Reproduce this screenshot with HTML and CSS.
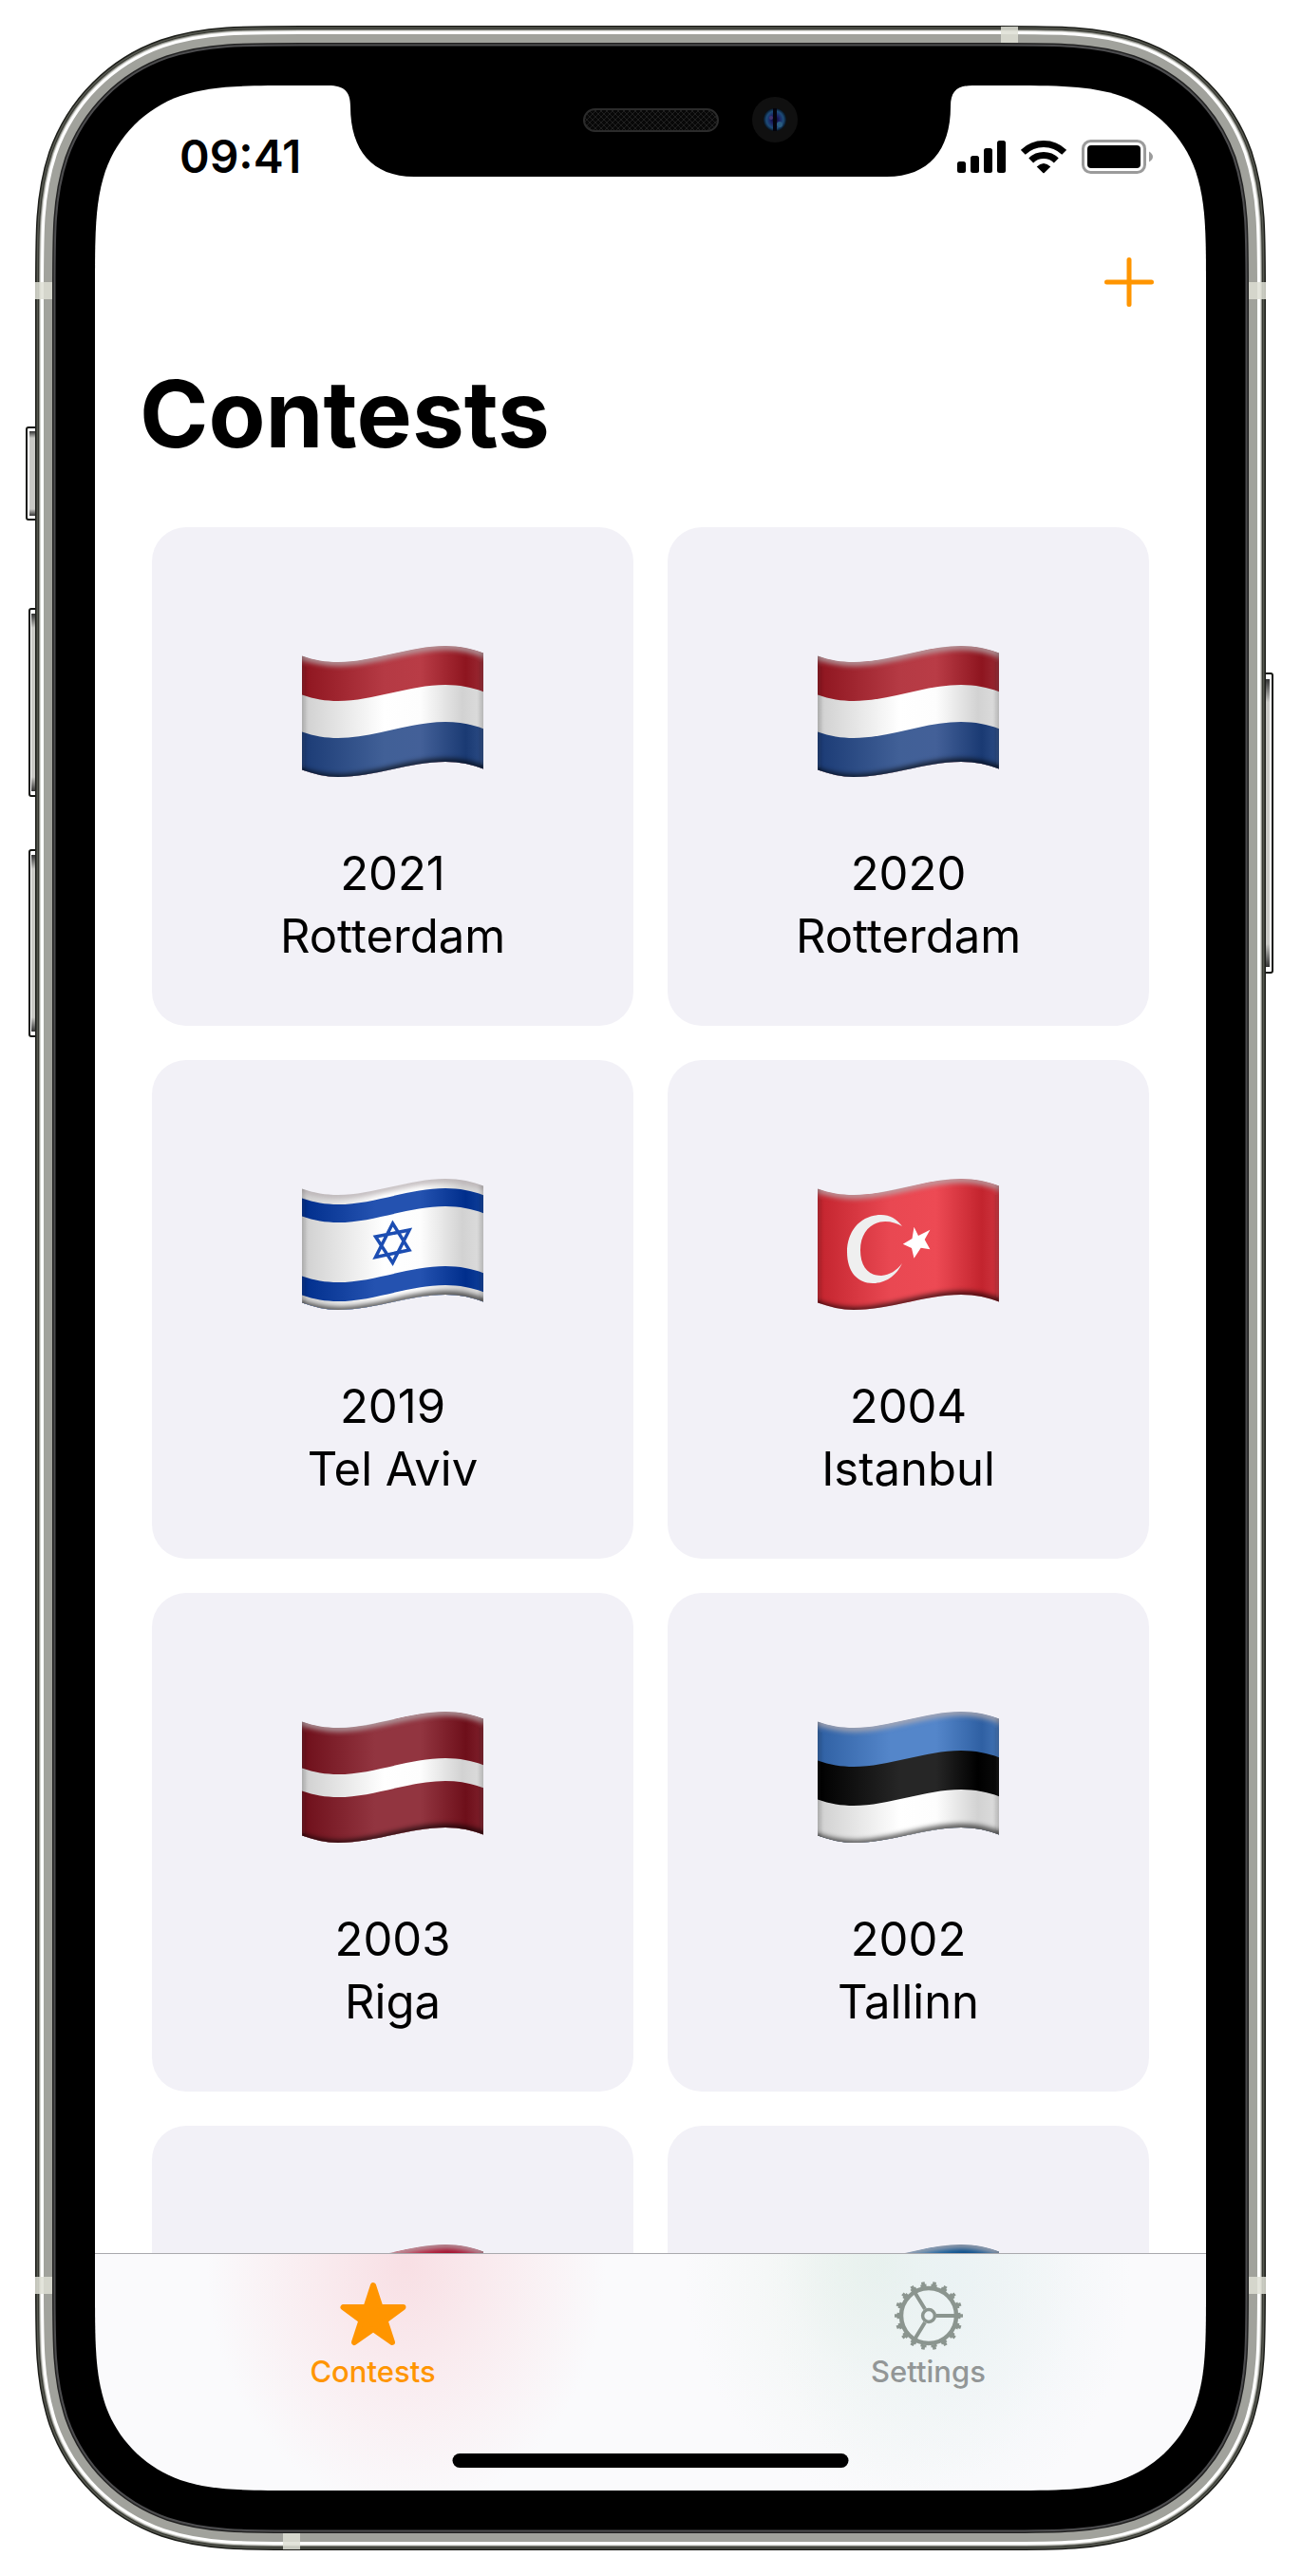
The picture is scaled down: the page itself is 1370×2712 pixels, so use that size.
FILE: index.html
```html
<!DOCTYPE html>
<html lang="en">
<head>
<meta charset="utf-8">
<meta name="viewport" content="width=device-width, initial-scale=1">
<title>Contests</title>
<link rel="stylesheet" href="styles.css">
</head>
<body>
<svg class="defs" width="0" height="0" aria-hidden="true">
  <defs>
    <path id="wave" d="M0 10.500C13 15 25 17 38 17C75 17 113 0 151 0C166 0 180 3 192 7.500V180H0Z"/>
    <path id="edge" d="M-4 9C13 15 25 17 38 17C75 17 113 0 151 0C166 0 180 3 196 9"/>
    <clipPath id="cloth"><path d="M0 10.500C13 15 25 17 38 17C75 17 113 0 151 0C166 0 180 3 191 7.500V129.500C180 125 166 122 151 122C113 122 77 138 38 138C25 138 13 135 0 130.500Z"/></clipPath>
    <filter id="soft" x="-10%" y="-50%" width="120%" height="200%"><feGaussianBlur stdDeviation="2.500"/></filter>
    <linearGradient id="white"><stop offset="0" stop-color="#cfcfcf"/><stop offset=".45" stop-color="#fff"/><stop offset=".65" stop-color="#fdfdfd"/><stop offset=".88" stop-color="#d2d2d2"/><stop offset="1" stop-color="#dedede"/></linearGradient>
    <linearGradient id="nl-red"><stop offset="0" stop-color="#8e151f"/><stop offset=".45" stop-color="#b53a44"/><stop offset=".65" stop-color="#b93c46"/><stop offset=".9" stop-color="#8e151f"/><stop offset="1" stop-color="#9a2c36"/></linearGradient>
    <linearGradient id="nl-blue"><stop offset="0" stop-color="#1b3b75"/><stop offset=".45" stop-color="#416097"/><stop offset=".65" stop-color="#436098"/><stop offset=".9" stop-color="#1a3a73"/><stop offset="1" stop-color="#2d4d86"/></linearGradient>
    <linearGradient id="il-blue"><stop offset="0" stop-color="#002e8c"/><stop offset=".4" stop-color="#2452b0"/><stop offset=".65" stop-color="#2452b0"/><stop offset=".9" stop-color="#002e8c"/><stop offset="1" stop-color="#10409a"/></linearGradient>
    <linearGradient id="tr-red"><stop offset="0" stop-color="#c3242e"/><stop offset=".4" stop-color="#e94852"/><stop offset=".65" stop-color="#ed4a54"/><stop offset=".9" stop-color="#c3242e"/><stop offset="1" stop-color="#cf3640"/></linearGradient>
    <linearGradient id="lv-red"><stop offset="0" stop-color="#6e0f1a"/><stop offset=".4" stop-color="#923540"/><stop offset=".65" stop-color="#923540"/><stop offset=".9" stop-color="#6e0f1a"/><stop offset="1" stop-color="#80222d"/></linearGradient>
    <linearGradient id="ee-blue"><stop offset="0" stop-color="#2f60a3"/><stop offset=".4" stop-color="#5486ca"/><stop offset=".65" stop-color="#5486ca"/><stop offset=".9" stop-color="#2f60a3"/><stop offset="1" stop-color="#4575b6"/></linearGradient>
    <linearGradient id="ee-black"><stop offset="0" stop-color="#000"/><stop offset=".45" stop-color="#262626"/><stop offset=".65" stop-color="#262626"/><stop offset=".88" stop-color="#000"/><stop offset="1" stop-color="#0c0c0c"/></linearGradient>
    <linearGradient id="dk-red"><stop offset="0" stop-color="#a50f2d"/><stop offset=".5" stop-color="#cc3450"/><stop offset=".8" stop-color="#a50f2d"/><stop offset="1" stop-color="#b02040"/></linearGradient>
    <linearGradient id="se-blue"><stop offset="0" stop-color="#0a4f8c"/><stop offset=".5" stop-color="#2a78b8"/><stop offset=".8" stop-color="#0a4f8c"/><stop offset="1" stop-color="#1c5f9a"/></linearGradient>
    <g id="shade" fill="none" filter="url(#soft)">
      <use href="#edge" stroke="#b5adb0" stroke-opacity=".75" stroke-width="9"/>
      <use href="#edge" y="122" stroke="#000" stroke-opacity=".6" stroke-width="8"/>
      <path d="M0 0V140M191 0V140" stroke="#222" stroke-opacity=".45" stroke-width="3"/>
    </g>
  </defs>
</svg>

<div class="phone">
  <div class="screen">
    <header class="status">
      <time class="clock">09:41</time>
      <div class="signals">
        <svg width="51" height="34" viewBox="0 0 51 34" role="img" aria-label="Signal"><rect y="22" width="9" height="12" rx="2.500"/><rect x="14" y="16" width="9" height="18" rx="2.500"/><rect x="28" y="8" width="9" height="26" rx="2.500"/><rect x="42" width="9" height="34" rx="2.500"/></svg>
        <svg width="48" height="36" viewBox="0 0 48 36" role="img" aria-label="Wi-Fi"><g fill="none" stroke="#000" stroke-width="7"><path d="M2.300 13.300A31 31 0 0 1 45.700 13.300"/><path d="M10.700 22A19 19 0 0 1 37.300 22"/></g><path d="M16.700 28.500Q24 21.500 31.300 28.500L24.700 35Q24 35.700 23.300 35Z"/></svg>
        <svg width="75" height="36" viewBox="0 0 75 36" role="img" aria-label="Battery"><rect x="1.500" y="1.500" width="65" height="33" rx="8" fill="none" stroke="#9b9b9b" stroke-width="3"/><rect x="6" y="6" width="56" height="24" rx="4"/><path d="M71 12.500Q75 15 75 18T71 23.500Z" fill="#9b9b9b"/></svg>
      </div>
    </header>
    <div class="navbar">
      <button class="add" type="button" aria-label="Add contest"><svg width="52" height="52" viewBox="0 0 52 52"><path d="M26 2.500V49.500M2.500 26H49.500" stroke="#ff9500" stroke-width="5" stroke-linecap="round"/></svg></button>
    </div>
    <h1 class="title">Contests</h1>

    <main class="list">
      <article class="card">
        <svg class="flag" viewBox="0 0 192 138" role="img" aria-label="Netherlands"><g clip-path="url(#cloth)"><use href="#wave" fill="url(#nl-red)"/><use href="#wave" y="41" fill="url(#white)"/><use href="#wave" y="80" fill="url(#nl-blue)"/><use href="#shade"/></g></svg>
        <p>2021</p><p>Rotterdam</p>
      </article>
      <article class="card">
        <svg class="flag" viewBox="0 0 192 138" role="img" aria-label="Netherlands"><g clip-path="url(#cloth)"><use href="#wave" fill="url(#nl-red)"/><use href="#wave" y="41" fill="url(#white)"/><use href="#wave" y="80" fill="url(#nl-blue)"/><use href="#shade"/></g></svg>
        <p>2020</p><p>Rotterdam</p>
      </article>
      <article class="card">
        <svg class="flag" viewBox="0 0 192 138" role="img" aria-label="Israel"><g clip-path="url(#cloth)"><use href="#wave" fill="url(#white)"/><use href="#wave" y="10" fill="url(#il-blue)"/><use href="#wave" y="29" fill="url(#white)"/><use href="#wave" y="92" fill="url(#il-blue)"/><use href="#wave" y="112" fill="url(#white)"/><path d="M95.500 47L113 75L77.500 82.500ZM95.500 88.500L113 54L77.500 61Z" fill="none" stroke="#1c4db2" stroke-width="3.500"/><use href="#shade"/></g></svg>
        <p>2019</p><p>Tel Aviv</p>
      </article>
      <article class="card">
        <svg class="flag" viewBox="0 0 192 138" role="img" aria-label="Turkey"><g clip-path="url(#cloth)"><use href="#wave" fill="url(#tr-red)"/><path d="M89 50C83 42 76 38 67 38C46 38 31 54 31 77C31 98 42 110 58 110C72 110 83 102 89 89C83 97 76 101 67 102C53 102 45 92 45 75C45 57 56 45 71 45C78 45 84 47 89 50Z" fill="#efefef"/><path d="M101.500 50.700L106 60L118.400 53.700L112.700 64L118.400 74.300L108.700 72.700L101.500 83.700L99 73L89.800 68.700L99.500 63Z" fill="#fff"/><use href="#shade"/></g></svg>
        <p>2004</p><p>Istanbul</p>
      </article>
      <article class="card">
        <svg class="flag" viewBox="0 0 192 138" role="img" aria-label="Latvia"><g clip-path="url(#cloth)"><use href="#wave" fill="url(#lv-red)"/><use href="#wave" y="49" fill="url(#white)"/><use href="#wave" y="73" fill="url(#lv-red)"/><use href="#shade"/></g></svg>
        <p>2003</p><p>Riga</p>
      </article>
      <article class="card">
        <svg class="flag" viewBox="0 0 192 138" role="img" aria-label="Estonia"><g clip-path="url(#cloth)"><use href="#wave" fill="url(#ee-blue)"/><use href="#wave" y="41" fill="url(#ee-black)"/><use href="#wave" y="82" fill="url(#white)"/><use href="#shade"/></g></svg>
        <p>2002</p><p>Tallinn</p>
      </article>
      <article class="card">
        <svg class="flag" viewBox="0 0 192 138" role="img" aria-label="Denmark"><g clip-path="url(#cloth)"><use href="#wave" fill="url(#dk-red)"/><path d="M62 0V140" stroke="#fff" stroke-width="18"/><use href="#shade"/></g></svg>
      </article>
      <article class="card">
        <svg class="flag" viewBox="0 0 192 138" role="img" aria-label="Sweden"><g clip-path="url(#cloth)"><use href="#wave" fill="url(#se-blue)"/><path d="M62 0V140" stroke="#fc0" stroke-width="22"/><use href="#shade"/></g></svg>
      </article>
    </main>

    <nav class="tabs">
      <a class="tab active" href="#contests">
        <svg width="72" height="72" viewBox="0 0 72 72"><path d="M36 4L43.500 27H67.500L48.500 41L56 64L36 50L16 64L23.500 41L4.500 27H28.500Z" fill="#ff9500" stroke="#ff9500" stroke-width="6" stroke-linejoin="round"/></svg>
        Contests
      </a>
      <a class="tab" href="#settings">
        <svg width="72" height="72" viewBox="0 0 72 72" fill="none" stroke="#8b958f"><circle cx="36" cy="36" r="29" stroke-width="4.500"/><circle cx="36" cy="36" r="32" stroke-width="3" pathLength="360" stroke-dasharray="11 9" stroke-dashoffset="5.500"/><circle cx="36" cy="36" r="34" stroke-width="4" pathLength="360" stroke-dasharray="6 14" stroke-dashoffset="3"/><circle cx="36" cy="36" r="6.400" stroke-width="3.500"/><path d="M44 36H64M32 29L21 11M32 43L21 61" stroke-width="4"/></svg>
        Settings
      </a>
      <span class="home"></span>
    </nav>
  </div>

  <svg class="frame" viewBox="0 0 1370 2712" preserveAspectRatio="none" aria-hidden="true">
    <defs>
      <path id="glass" d="M317 90H1053C1115 90 1147 90 1180 101C1217 114 1246 143 1259 180C1270 213 1270 245 1270 307V2405C1270 2467 1270 2499 1259 2532C1246 2569 1217 2598 1180 2611C1147 2622 1115 2622 1053 2622H317C255 2622 223 2622 190 2611C153 2598 124 2569 111 2532C100 2499 100 2467 100 2405V307C100 245 100 213 111 180C124 143 153 114 190 101C223 90 255 90 317 90Z"/>
      <mask id="outside" maskUnits="userSpaceOnUse" x="0" y="0" width="1370" height="2712"><rect width="1370" height="2712" fill="#fff"/><use href="#glass" fill="#000"/></mask>
      <linearGradient id="key" x2="0" y2="1"><stop offset="0" stop-color="#333"/><stop offset=".08" stop-color="#c9c9c5"/><stop offset=".92" stop-color="#c9c9c5"/><stop offset="1" stop-color="#333"/></linearGradient>
      <radialGradient id="lens"><stop offset="0" stop-color="#050515"/><stop offset=".35" stop-color="#1a1c60"/><stop offset=".75" stop-color="#1d4c78"/><stop offset="1" stop-color="#071524"/></radialGradient>
      <pattern id="mesh" width="6" height="6" patternUnits="userSpaceOnUse"><rect width="6" height="6" fill="#080808"/><path d="M0 0L6 6M6 0L0 6" stroke="#202020"/></pattern>
    </defs>
    <g fill="#fff" stroke="#151612" stroke-width="2">
      <rect x="28" y="450" width="16" height="97" rx="2"/><rect x="31" y="641" width="14" height="197" rx="2"/><rect x="31" y="895" width="14" height="196" rx="2"/><rect x="1326" y="709" width="14" height="315" rx="2"/>
    </g>
    <g fill="url(#key)"><rect x="31" y="454" width="8" height="89"/><rect x="33" y="646" width="6" height="187"/><rect x="33" y="900" width="6" height="186"/><rect x="1331" y="715" width="6" height="303"/></g>
    <g mask="url(#outside)" fill="none">
      <use href="#glass" stroke="#1d1e1a" stroke-width="126"/>
      <use href="#glass" stroke="#55574f" stroke-width="123"/>
      <use href="#glass" stroke="#34362f" stroke-width="120"/>
      <use href="#glass" stroke="#8c8d87" stroke-width="118"/>
      <use href="#glass" stroke="#d4d5d0" stroke-width="116"/>
      <use href="#glass" stroke="#fff" stroke-width="114"/>
      <use href="#glass" stroke="#a1a29c" stroke-width="108"/>
      <use href="#glass" stroke="#222" stroke-width="90"/>
      <use href="#glass" stroke="#4d4d4f" stroke-width="87"/>
      <use href="#glass" stroke="#000" stroke-width="83"/>
    </g>
    <g fill="#dedfd5" fill-opacity=".85"><rect x="37" y="297" width="18" height="18"/><rect x="1315" y="297" width="18" height="18"/><rect x="37" y="2397" width="18" height="18"/><rect x="1315" y="2397" width="18" height="18"/><rect x="1054" y="28" width="18" height="17"/><rect x="298" y="2667" width="18" height="17"/></g>
    <path d="M346 88V90C362 90 369 96 369 112C369 158 392 186 436 186H934C978 186 1001 158 1001 112C1001 96 1008 90 1024 90V88Z"/>
    <rect x="615" y="115" width="141" height="23" rx="11.500" fill="url(#mesh)" stroke="#2b2b2b" stroke-width="2"/>
    <circle cx="816" cy="126" r="24" fill="#101010"/>
    <circle cx="816" cy="126" r="12" fill="url(#lens)"/>
    <path d="M816 114V138" stroke="#03030c" stroke-width="4"/>
    <circle cx="812" cy="124" r="2" fill="#44336e"/><circle cx="821" cy="131" r="3" fill="#2a5c80"/>
  </svg>
</div>
</body>
</html>
```
FILE: styles.css
```css
* {
  box-sizing: border-box;
}

body {
  margin: 0;
  background: #fff;
  color: #000;
  font-family: Inter, "Liberation Sans", sans-serif;
}

.defs {
  position: absolute;
}

.phone {
  position: relative;
  height: 100vh;
  padding: 90px 100px;
}

/* The hardware is one drawing laid over the screen. */
.frame {
  position: absolute;
  inset: 0;
  width: 100%;
  height: 100%;
  pointer-events: none;
}

.screen {
  display: flex;
  flex-direction: column;
  height: 100%;
  background: #fff;
}

.status {
  display: flex;
  flex: none;
  align-items: center;
  justify-content: space-between;
  height: 141px;
  padding: 8px 56px 0 89px;
}

.clock {
  font-size: 48px;
  font-weight: 600;
  line-height: 60px;
}

.signals {
  display: flex;
  align-items: center;
  gap: 16px;
}

.navbar {
  display: flex;
  flex: none;
  align-items: center;
  justify-content: flex-end;
  height: 132px;
  padding: 0 55px;
}

.add {
  display: flex;
  padding: 0;
  border: 0;
  background: none;
}

.title {
  flex: none;
  margin: 0;
  padding: 0 47px 10px;
  font-size: 98px;
  font-weight: 700;
  line-height: 146px;
}

.list {
  display: grid;
  flex: 1;
  grid-template-columns: 1fr 1fr;
  grid-auto-rows: 525px;
  gap: 36px;
  min-height: 0;
  padding: 36px 60px;
  overflow: hidden auto;
  scrollbar-width: none;
}

.card {
  display: flex;
  flex-direction: column;
  align-items: center;
  padding: 125px 24px 60px;
  border-radius: 36px;
  background: #f2f1f7;
}

.card p {
  margin: 0;
  font-size: 49px;
  line-height: 66px;
}

.flag {
  flex: none;
  width: 192px;
  height: 138px;
  margin-bottom: 69px;
}

.tabs {
  position: relative;
  display: flex;
  flex: none;
  height: 250px;
  border-top: 1px solid #a9a9ad;
  background:
    radial-gradient(210px 260px at 28% 4%, #f8dfe4, rgba(249, 232, 236, .8) 45%, rgba(250, 250, 251, 0)),
    radial-gradient(190px 250px at 77% 10%, rgba(234, 242, 244, .9), rgba(250, 250, 251, 0)),
    radial-gradient(210px 250px at 71% 4%, #e5f0e7, rgba(240, 245, 242, .6) 50%, rgba(250, 250, 251, 0)),
    #fafafc;
}

.tab {
  display: flex;
  flex: 1;
  flex-direction: column;
  align-items: center;
  gap: 5px;
  padding-top: 29px;
  color: #929696;
  font-size: 31px;
  font-weight: 500;
  line-height: 36px;
  text-decoration: none;
}

.tab.active {
  color: #ff9500;
}

.home {
  position: absolute;
  bottom: 24px;
  left: 50%;
  width: 417px;
  height: 15px;
  border-radius: 8px;
  background: #000;
  transform: translateX(-50%);
}
```
